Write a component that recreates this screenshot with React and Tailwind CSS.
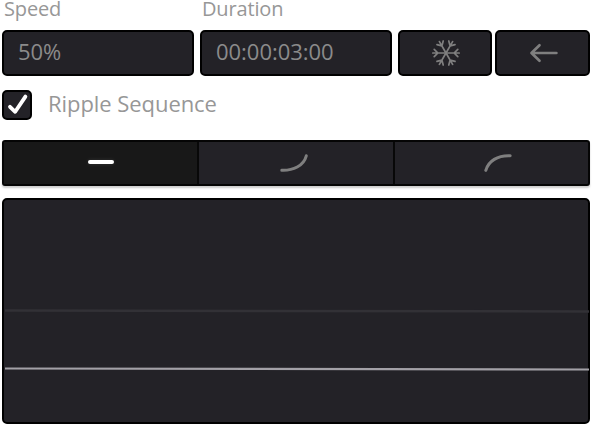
function Field({ label, value }) {
  return (
    <div className="w-[192px]">
      <div className="h-[30px] pl-[2px] text-[20px] leading-[18px] tracking-[-0.15px] text-[#979797]">{label}</div>
      <div className="flex h-[46px] items-center rounded-[5px] border-2 border-black bg-[#232227] pl-[14px] text-[22px] text-[#8b8b8b]">
        <span className="mb-[4px] whitespace-nowrap leading-[38px] tracking-[-0.03px]">{value}</span>
      </div>
    </div>
  );
}

function Snowflake() {
  return (
    <svg width="30" height="30" viewBox="-15 -15 30 30" fill="none" stroke="#7f7f7f" strokeWidth="1.7" strokeLinecap="round" className="ml-[2px]">
      {[0, 60, 120, 180, 240, 300].map((angle) => (
        <path key={angle} d="M0 0H13.2M11.8 -3.6L8.2 0L11.8 3.6" transform={`rotate(${angle})`} />
      ))}
    </svg>
  );
}

function ToolButton({ label, className, children }) {
  return (
    <button aria-label={label} className={`flex h-[46px] items-center justify-center rounded-[5px] border-2 border-black bg-[#232227] ${className}`}>
      {children}
    </button>
  );
}

const curve = { width: 32, height: 24, viewBox: "0 0 32 24", fill: "none", strokeLinecap: "round" };

export default function App() {
  return (
    <main className="flex h-[424px] w-[592px] flex-col overflow-hidden bg-white pl-[2px] font-['Open_Sans',sans-serif]">
      <div className="flex items-end">
        <Field label="Speed" value="50%" />
        <div className="ml-[6px]">
          <Field label="Duration" value="00:00:03:00" />
        </div>
        <ToolButton label="Freeze frame" className="ml-[6px] w-[94px]">
          <Snowflake />
        </ToolButton>
        <ToolButton label="Reverse" className="ml-[3px] w-[95px]">
          <svg width="32" height="24" viewBox="0 0 32 24" fill="none" stroke="#7f7f7f" strokeWidth="2.7" strokeLinecap="round" strokeLinejoin="round" className="ml-[3px]">
            <path d="M28.4 12H3.7M11.5 4.2L3.5 12L11.5 19.8" />
          </svg>
        </ToolButton>
      </div>

      <div className="mt-[14px] flex h-[30px] items-center">
        <div role="checkbox" aria-checked="true" className="flex h-[30px] w-[30px] items-center justify-center rounded-[5px] border-2 border-black bg-[#232227]">
          <svg width="26" height="26" viewBox="0 0 26 26" fill="none" stroke="white" strokeWidth="3.8" strokeLinecap="round" strokeLinejoin="round">
            <path d="M6 14.8L11.2 19.8L21.4 4.6" />
          </svg>
        </div>
        <span className="mb-[3px] ml-[16px] whitespace-nowrap text-[22px] leading-[27px] tracking-[-0.06px] text-[#979797]">Ripple Sequence</span>
      </div>

      <div className="mt-[20px] flex h-[46px] w-[588px] shrink-0 rounded-[3px] border-2 border-[#050505] bg-[#232227] shadow-[0_2px_2px_rgba(0,0,0,0.2)]">
        <div className="flex w-[195px] items-center justify-center border-r-2 border-[#080808] bg-[#181818] pl-[1px]">
          <div className="mb-[2px] mr-px h-[4px] w-[26px] rounded-[2px] bg-white shadow-[0_0_4px_rgba(255,255,255,0.12)]" />
        </div>
        <div className="flex w-[196px] items-center justify-center border-r-2 border-[#080808]">
          <svg {...curve} stroke="#7f7f7f" strokeWidth="3">
            <path d="M1.8 19.2C13 19.6 23.6 15 26.3 4.8" />
          </svg>
        </div>
        <div className="flex flex-1 items-center justify-center pl-[12px]">
          <svg {...curve} stroke="#7f7f7f" strokeWidth="3">
            <path d="M3.8 19.4C6.4 10.2 15.6 4.1 28.2 4.7" />
          </svg>
        </div>
      </div>

      <div className="mt-[12px] h-[226px] w-[588px] shrink-0 rounded-[5px] border-2 border-black bg-[#232227]">
        <svg width="585" height="222" viewBox="0 0 585 222" fill="none" className="block overflow-visible">
          <path d="M1 110.5L585 111.5" stroke="#323136" strokeWidth="2.5" />
          <path d="M1 168.5L585 169.5" stroke="#a3a1a7" strokeWidth="2.2" />
        </svg>
      </div>
    </main>
  );
}
